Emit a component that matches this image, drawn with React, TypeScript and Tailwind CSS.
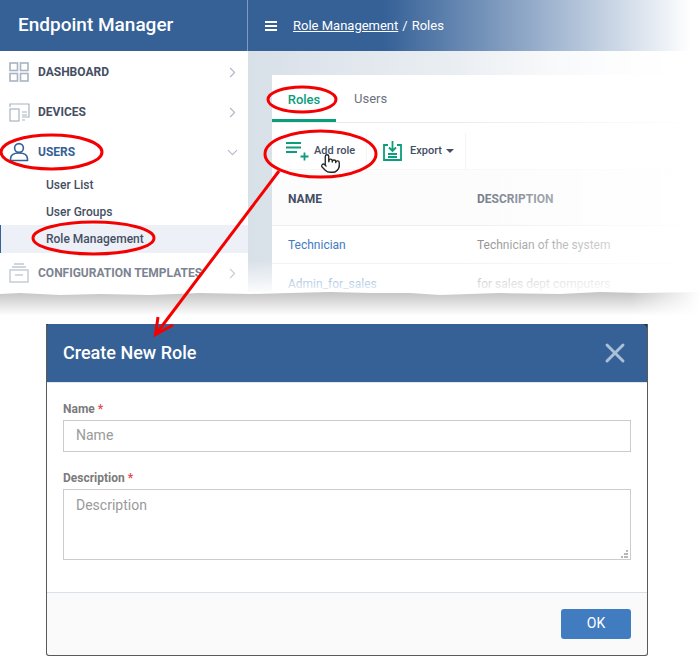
import { ChevronDown, ChevronRight, Pointer, X } from "lucide-react"

const NavIcon = ({ kind }: { kind: string }) => {
  if (kind === "dashboard") {
    return (
      <svg width="20" height="20" viewBox="0 0 20 20" fill="none" stroke="#a9b4c0" strokeWidth="1.6">
        <rect x="1" y="1" width="7.5" height="7.5" />
        <rect x="11.5" y="1" width="7.5" height="7.5" />
        <rect x="1" y="11.5" width="7.5" height="7.5" />
        <rect x="11.5" y="11.5" width="7.5" height="7.5" />
      </svg>
    )
  }
  if (kind === "devices") {
    return (
      <svg width="21" height="19" viewBox="0 0 21 19" fill="none" stroke="#a9b4c0" strokeWidth="1.2">
        <path d="M1 4V1h19v13h-7" />
        <rect x="1" y="6" width="9" height="12" />
        <path d="M13 9h5M13 12h5M13 17h3" />
      </svg>
    )
  }
  if (kind === "users") {
    return (
      <svg width="20" height="20" viewBox="0 0 20 20" fill="none" stroke="#356197" strokeWidth="1.6">
        <circle cx="10" cy="6" r="4.4" />
        <path d="M1.5 18.5v-1.5c0-3.5 3-6 8.5-6s8.5 2.500 8.500 6v1.500z" />
      </svg>
    )
  }
  return (
    <svg width="20" height="20" viewBox="0 0 20 20" fill="none" stroke="#a9b4c0" strokeWidth="1.4">
      <path d="M5 1h10M3 4h14" />
      <rect x="1" y="7" width="18" height="12" />
      <path d="M6 12h8" />
    </svg>
  )
}

const NavRow = ({ kind, label, active, open }: { kind: string; label: string; active?: boolean; open?: boolean }) => (
  <div className="flex h-10 items-center pl-[9px] pr-[7px]">
    <div className="flex w-[29px] shrink-0">
      <NavIcon kind={kind} />
    </div>
    <span className={`flex-1 text-[12px] font-bold ${active ? "text-[#356197]" : "text-[#454f63]"}`}>{label}</span>
    {open ? (
      <ChevronDown size={17} strokeWidth={1.5} className="text-[#b0b9c6]" />
    ) : (
      <ChevronRight size={17} strokeWidth={1.5} className="text-[#b0b9c6]" />
    )}
  </div>
)

const Annotations = () => (
  <svg className="pointer-events-none absolute left-0 top-0" width="700" height="658" fill="none" stroke="#f40000" strokeWidth="3">
    <ellipse cx="302" cy="99.500" rx="34" ry="12.500" />
    <ellipse cx="320.500" cy="154" rx="55.500" ry="23" />
    <ellipse cx="51.500" cy="152" rx="50.500" ry="17" />
    <ellipse cx="93.500" cy="238" rx="60.500" ry="16" />
    <path d="M279 171L156 334" />
    <path d="M158 317L155.500 334.500L173 325" />
  </svg>
)

export default function App() {
  return (
    <div className="relative h-[658px] w-[700px] overflow-hidden bg-white font-['Roboto',sans-serif]">
      {/* Top screenshot */}
      <div className="relative h-[292px] overflow-hidden">
        <div className="flex h-[51px]">
          <div className="flex w-[248px] shrink-0 items-center border-r border-[#7f9cc0] bg-[#356197] pl-[18px] text-[19px] font-medium text-white">
            Endpoint Manager
          </div>
          <div className="flex flex-1 items-center bg-gradient-to-r from-[#356197] from-[30%] via-[#a9bcd4] via-[70%] to-white to-[98%] pl-[17px] text-[13px] text-white">
            <span className="flex w-[12px] flex-col gap-[2px]">
              <span className="h-[2px] bg-white" />
              <span className="h-[2px] bg-white" />
              <span className="h-[2px] bg-white" />
            </span>
            <span className="ml-[16px] underline">Role Management</span>
            <span className="mx-[4px]">/</span>
            <span>Roles</span>
          </div>
        </div>
        <div className="flex h-[241px]">
          <div className="w-[248px] shrink-0 bg-white pt-px">
            <NavRow kind="dashboard" label="DASHBOARD" />
            <NavRow kind="devices" label="DEVICES" />
            <NavRow kind="users" label="USERS" active open />
            <div className="-mt-px flex flex-col text-[12px] font-medium text-[#454f63]">
              <div className="flex h-[27px] items-center pl-[46px]">User List</div>
              <div className="flex h-[27px] items-center pl-[46px]">User Groups</div>
              <div className="flex h-[28px] items-center border-l border-[#356197] bg-[#edf1f7] pl-[45px]">Role Management</div>
            </div>
            <div className="opacity-70">
              <NavRow kind="templates" label="CONFIGURATION TEMPLATES" />
            </div>
          </div>
          <div className="flex-1 bg-gradient-to-r from-[#d8e0e8] to-white pl-6 pt-6">
            <div className="h-full bg-white">
              <div className="flex h-[48px] border-b border-[#ececec] text-[13px]">
                <div className="flex w-16 items-center justify-center border-b-[3px] border-[#0c9d7c] pt-[5px] font-medium text-[#0c9d7c]">Roles</div>
                <div className="flex items-center pl-[18px] pt-[1px] text-[#6b7280]">Users</div>
              </div>
              <div className="flex h-[47px] border-b border-[#f7f7f7] pt-[10px]">
                <div className="flex w-[95px] items-center border-r border-[#f4f4f4] pl-[14px] text-[11px] font-medium text-[#454f63]">
                  <svg width="23" height="20" viewBox="0 0 23 20" fill="none" stroke="#0c9d7c" strokeWidth="1.800">
                    <path d="M0 2h15M0 6.500h15M0 11h11M14.500 15.500h8M18.500 11.500v8" />
                  </svg>
                  <span className="ml-[5px]">Add role</span>
                </div>
                <div className="flex w-[99px] items-center border-r border-[#f4f4f4] pl-[16px] text-[11px] font-medium text-[#454f63]">
                  <svg width="19" height="20" viewBox="0 0 19 20" fill="none" stroke="#0c9d7c" strokeWidth="1.800">
                    <path d="M5 4H1v15h17V4h-4M9.500 0v9M6 6.500l3.500 3.500 3.500-3.500M5 13h9M5 16h9" />
                  </svg>
                  <span className="ml-[8px]">Export</span>
                  <span className="ml-[4px] h-0 w-0 border-x-[4px] border-t-[4px] border-x-transparent border-t-[#454f63]" />
                </div>
              </div>
              <div className="flex h-[56px] items-center border-b border-[#eeeeee] bg-[#fcfcfd] pt-[3px] text-[12px] font-bold">
                <span className="w-[205px] pl-4 text-[#454f63]">NAME</span>
                <span className="text-[#6b7280]">DESCRIPTION</span>
              </div>
              <div className="flex h-[38px] items-center border-b border-[#f1f1f1] pt-px text-[12px]">
                <span className="w-[205px] pl-4 text-[#427cc0]">Technician</span>
                <span className="text-[#8a8a8a]">Technician of the system</span>
              </div>
              <div className="flex h-[38px] items-center pt-px text-[12px]">
                <span className="w-[205px] pl-4 text-[#427cc0]">Admin_for_sales</span>
                <span className="text-[#8a8a8a]">for sales dept computers</span>
              </div>
            </div>
          </div>
        </div>
        <div className="absolute bottom-0 left-[248px] right-0 h-[32px] bg-gradient-to-b from-transparent to-white/90" />
        <div className="absolute bottom-0 right-0 top-[51px] w-[240px] bg-gradient-to-r from-transparent to-white" />
      </div>

      {/* Torn edge shadow */}
      <div className="relative h-[24px] bg-gradient-to-b from-[#c4c4c4] to-white">
        <svg className="absolute left-0 top-0" width="700" height="6" fill="#ffffff">
          <path d="M0 0H700V0L640 1L600 0L560 2L500 1L440 3L410 1L370 1L330 0L290 1L250 2L200 1L150 3L100 2L60 3L20 1L0 2z" />
        </svg>
        <div className="absolute bottom-0 right-0 top-0 w-[70px] bg-gradient-to-r from-transparent to-white" />
      </div>

      {/* Dialog */}
      <div className="ml-[46px] mt-2 flex h-[332px] w-[602px] flex-col overflow-hidden rounded-b-[3px] border-x border-b border-[#5a5a5a] bg-[#1d3350]">
        <div className="flex h-[59px] shrink-0 items-center justify-between rounded-tl-[2px] rounded-tr-[5px] border-b border-[#dfe6ee] bg-[#356197] pl-4 pr-4">
          <span className="-mt-px text-[18px] font-medium text-white">Create New Role</span>
          <X size={32} strokeWidth={2.2} className="text-[#a9c0d6]" />
        </div>
        <div className="flex flex-1 flex-col bg-white px-4 pt-[19px]">
          <label className="text-[12px] font-bold leading-[14px] text-[#7b7b7b]">
            Name <span className="text-[#e5484d]">*</span>
          </label>
          <input
            placeholder="Name"
            className="mt-[4px] h-8 w-full border border-[#cccccc] px-3 pb-[2px] text-[14px] outline-none placeholder:text-[#9a9a9a]"
          />
          <label className="mt-[19px] text-[12px] font-bold leading-[14px] text-[#7b7b7b]">
            Description <span className="text-[#e5484d]">*</span>
          </label>
          <div className="relative mt-[4px] flex">
            <textarea
              placeholder="Description"
              className="h-[71px] w-full resize-none border border-[#cccccc] px-3 py-[5px] text-[14px] outline-none placeholder:text-[#9a9a9a]"
            />
            <svg className="absolute bottom-[2px] right-[2px]" width="8" height="8" fill="#b8b8b8">
              <rect x="5" y="0" width="2" height="2" />
              <rect x="3" y="3" width="2" height="2" />
              <rect x="5" y="3" width="2" height="2" />
              <rect x="0" y="6" width="2" height="2" />
              <rect x="3" y="6" width="2" height="2" />
              <rect x="5" y="6" width="2" height="2" />
            </svg>
          </div>
        </div>
        <div className="flex h-[63px] shrink-0 items-center justify-end border-t border-[#d8e0e8] bg-[#fafafa] pr-4">
          <button className="mb-[1px] h-[30px] w-[70px] rounded-[3px] bg-[#427cc0] text-[14px] text-white">OK</button>
        </div>
      </div>

      <Annotations />
      <Pointer size={21} fill="#ffffff" strokeWidth={1.500} className="absolute left-[320px] top-[153px] text-[#222222]" />
    </div>
  )
}
